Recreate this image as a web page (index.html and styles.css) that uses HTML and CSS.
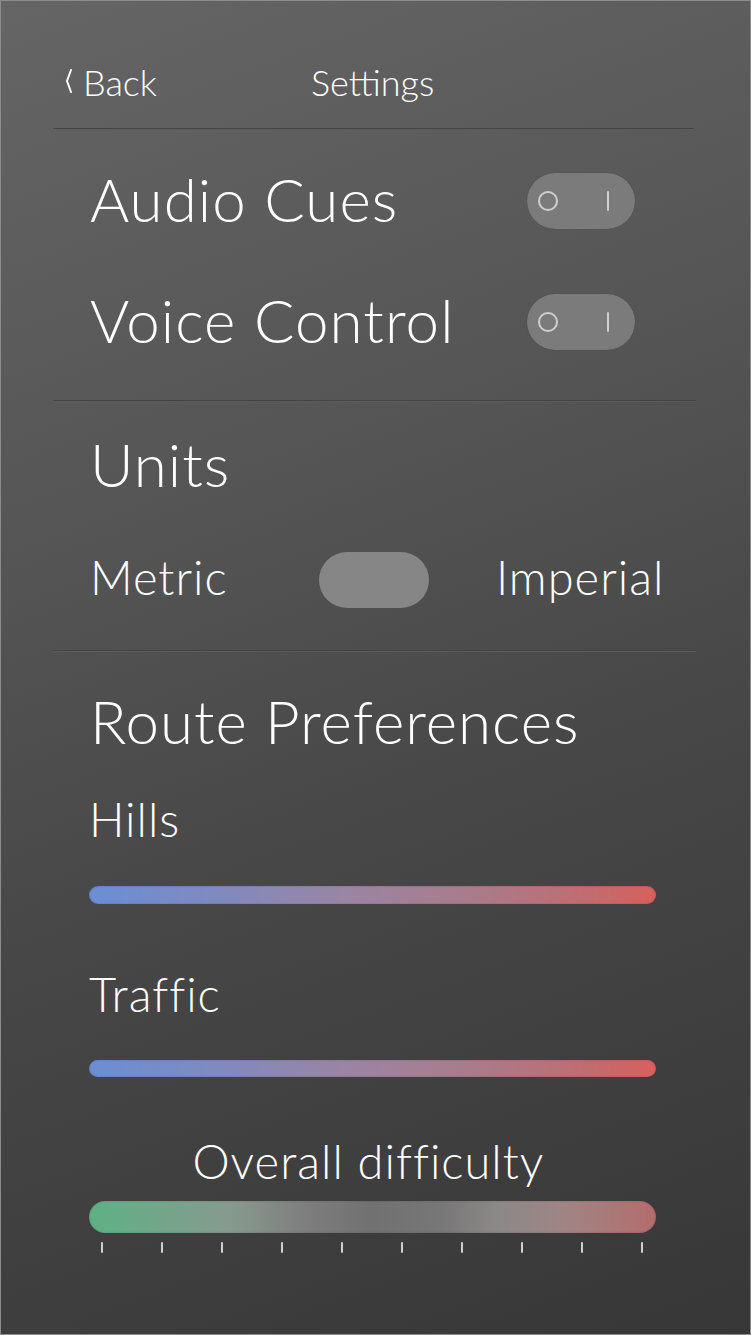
FILE: index.html
```html
<!DOCTYPE html>
<html>
<head>
<meta charset="utf-8">
<link rel="stylesheet" href="styles.css">
</head>
<body>
<div class="screen">
  <div class="header">
    <div class="back"><svg class="chev" width="9" height="26" viewBox="0 0 9 26"><path d="M7 2 L3 13 L7 24" fill="none" stroke="#fff" stroke-width="2" stroke-linecap="round" stroke-linejoin="round"/></svg><span>Back</span></div>
    <div class="title">Settings</div>
  </div>
  <div class="divider d1"></div>

  <div class="row r1">
    <div class="label big">Audio Cues</div>
    <div class="toggle"><span class="o"></span><span class="i"></span></div>
  </div>
  <div class="row r2">
    <div class="label big">Voice Control</div>
    <div class="toggle"><span class="o"></span><span class="i"></span></div>
  </div>
  <div class="divider d2"></div>

  <div class="heading units">Units</div>
  <div class="unitrow">
    <div class="label med metric">Metric</div>
    <div class="utoggle"></div>
    <div class="label med imperial">Imperial</div>
  </div>
  <div class="divider d3"></div>

  <div class="heading route">Route Preferences</div>
  <div class="label med sub hills">Hills</div>
  <div class="bar pref b-hills"></div>
  <div class="label med sub traffic">Traffic</div>
  <div class="bar pref b-traffic"></div>
  <div class="label med overall">Overall difficulty</div>
  <div class="bar diff"></div>
  <div class="ticks">
    <span></span><span></span><span></span><span></span><span></span>
    <span></span><span></span><span></span><span></span><span></span>
  </div>
</div>
</body>
</html>
```

FILE: styles.css
```css
* { box-sizing: border-box; }
html, body { margin: 0; padding: 0; }
body {
  width: 751px;
  height: 1335px;
  overflow: hidden;
  font-family: "Lato", "Open Sans", sans-serif;
  font-weight: 300;
  color: #fff;
}
.screen {
  width: 751px;
  height: 1335px;
  border: 1px solid #8c8c8c;
  background: linear-gradient(160deg, #656565 0%, #555 35%, #474747 60%, #373737 100%);
  display: flex;
  flex-direction: column;
}
.header {
  display: flex;
  align-items: center;
  height: 48px;
  margin-top: 57px;
  padding-left: 63px;
  font-size: 36px;
  line-height: 1;
}
.back { width: 247px; display: flex; align-items: center; }
.chev { display: block; margin-right: 10px; margin-top: -2px; }
.divider {
  height: 2px;
  margin-left: 52px;
  width: 641px;
  background: linear-gradient(#434343 0 50%, #5d5d5d 50% 100%);
  border-radius: 1px;
}
.d1 { margin-top: 22px; }
.d2 { margin-top: 43px; width: 643px; }
.d3 { margin-top: 40px; width: 643px; }

.label, .heading { line-height: 1; white-space: nowrap; }
.big { font-size: 60px; letter-spacing: 1.1px; }
.med { font-size: 47px; letter-spacing: 1px; }
.heading { font-size: 60px; letter-spacing: 1px; height: 70px; display: flex; align-items: center; margin-left: 89px; }

.row {
  display: flex;
  align-items: center;
  justify-content: space-between;
  height: 70px;
  margin-left: 89px;
  width: 545px;
}
.row .label { position: relative; top: -2px; }
.r1 { margin-top: 36px; }
.r2 { margin-top: 51px; }

.toggle {
  position: relative;
  width: 108px;
  height: 56px;
  border-radius: 28px;
  background: #7b7b7b;
  box-shadow: 0 0 1px rgba(0,0,0,0.3);
}
.toggle .o {
  position: absolute;
  left: 11px;
  top: 18px;
  width: 20px;
  height: 20px;
  border: 2px solid #cfcfcf;
  border-radius: 50%;
}
.toggle .i {
  position: absolute;
  left: 80px;
  top: 18px;
  width: 2px;
  height: 20px;
  background: #cfcfcf;
  border-radius: 1px;
}

.units { margin-top: 27px; }
.unitrow {
  display: flex;
  align-items: center;
  height: 60px;
  margin-top: 51px;
  margin-left: 89px;
}
.unitrow .label { position: relative; top: -3px; }
.metric { width: 229px; }
.utoggle {
  width: 110px;
  height: 56px;
  border-radius: 28px;
  background: #868686;
  margin-right: 67px;
}

.route { margin-top: 34px; }
.sub { height: 50px; display: flex; align-items: center; margin-left: 88px; }
.hills { margin-top: 38px; }
.traffic { margin-top: 65px; }

.bar {
  margin-left: 88px;
  width: 567px;
  border-radius: 20px;
}
.pref {
  background: linear-gradient(90deg, #6a8fd4 0%, #8289bd 25%, #9a85a4 45%, #ac7a88 70%, #c06c70 88%, #d9605c 100%);
  box-shadow: inset 0 0 2px rgba(0,0,0,0.25);
}
.b-hills { margin-top: 42px; height: 18px; }
.b-traffic { margin-top: 41px; height: 17px; }

.overall {
  height: 50px;
  margin-top: 59px;
  margin-left: 84px;
  width: 567px;
  display: flex;
  align-items: center;
  justify-content: center;
}
.diff {
  margin-top: 15px;
  height: 32px;
  border-radius: 16px;
  background: linear-gradient(90deg, #5fb184 0%, #72a68a 12%, #879a8e 25%, #7e7e7e 38%, #717171 50%, #777 62%, #8c8888 72%, #a08484 84%, #b46c6c 100%);
  box-shadow: inset 0 0 2px rgba(0,0,0,0.25);
}
.ticks {
  display: flex;
  justify-content: space-between;
  margin-top: 9px;
  margin-left: 100px;
  width: 542px;
  height: 11px;
}
.ticks span {
  width: 2px;
  height: 11px;
  background: #d0d0d0;
  border-radius: 1px;
}
```
